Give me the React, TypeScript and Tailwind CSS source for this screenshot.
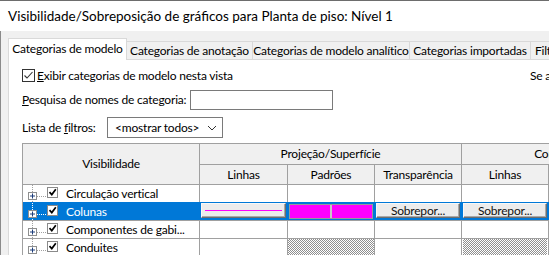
import type { ReactNode } from "react";

const grid = "border-[#a0a0a0]";

function TopCheck() {
  return (
    <span className="flex h-[13px] w-[13px] shrink-0 items-center justify-center border border-[#333333] bg-white">
      <svg width="11" height="11" viewBox="0 0 11 11">
        <path d="M1.5 5.5 L4 8 L9.5 2" fill="none" stroke="#333333" strokeWidth="1.1" />
      </svg>
    </span>
  );
}

function TreeNode({ selected }: { selected?: boolean }) {
  const dot = selected ? "#ffffff" : "#a0a0a0";
  return (
    <svg width="43" height="17" viewBox="0 0 43 17" className="shrink-0">
      <line x1="9.5" y1="0" x2="9.5" y2="17" stroke={dot} strokeDasharray="1 1" />
      <line x1="14" y1="11.5" x2="23" y2="11.5" stroke={dot} strokeDasharray="1 1" />
      <rect x="5.5" y="7.5" width="8" height="7" fill="#ffffff" stroke="#8e8f8f" />
      <line x1="7" y1="11" x2="12" y2="11" stroke="#1c3d7a" />
      <line x1="9.5" y1="8.5" x2="9.5" y2="13.5" stroke="#1c3d7a" />
      <rect x="24.5" y="2.5" width="10" height="10" fill="#ffffff" stroke="#8a8a8a" />
      <path d="M26.5 7.2 L28.8 9.6 L32.8 4.3" fill="none" stroke="#000000" strokeWidth="1.7" />
    </svg>
  );
}

function Cell({ w, children, className = "" }: { w: string; children?: ReactNode; className?: string }) {
  return <div className={`${w} h-full shrink-0 border-r ${className}`}>{children}</div>;
}

function Hatch() {
  return (
    <div className="h-full w-full bg-[repeating-conic-gradient(#8f8f8f_0_25%,#ffffff_0_50%)] bg-[length:2px_2px]" />
  );
}

function WinButton({ children }: { children?: ReactNode }) {
  return (
    <div className="flex h-[15px] w-full items-center justify-center border border-[#f8f8f8] border-r-[#6e6e6e] border-b-[#6e6e6e] bg-[#ececec] text-[#111111] shadow-[inset_-1px_-1px_0_#a8a8a8]">
      {children}
    </div>
  );
}

const rows = [
  { name: "Circulação vertical" },
  { name: "Colunas", selected: true },
  { name: "Componentes de gabi..." },
  { name: "Conduites", hatched: true },
];

export default function App() {
  return (
    <div className="h-[255px] w-[549px] overflow-hidden bg-white font-['Lato',sans-serif] text-[12px] tracking-[-0.2px] text-black">
      <div className="flex h-[31px] items-center border-t border-[#6d6d6d] pl-2 text-[13.5px] tracking-normal">
        Visibilidade/Sobreposição de gráficos para Planta de piso: Nível 1
      </div>

      <div className="h-[224px] border-l border-[#8a8a8a] bg-[#f0f0f0] pl-[7px] pt-[6px]">
        <div className="flex h-[22px] items-end whitespace-nowrap">
          <div className="relative z-10 -mb-px flex h-[22px] w-[119px] shrink-0 items-center justify-center border border-b-0 border-[#d9d9d9] bg-white pb-px">
            Categorias de modelo
          </div>
          {[
            ["Categorias de anotação", "w-[126px] justify-center"],
            ["Categorias de modelo analítico", "w-[157px] justify-center"],
            ["Categorias importadas", "w-[121px] justify-center"],
            ["Filtros", "w-[48px] justify-start pl-[4px]"],
          ].map(([label, w]) => (
            <div
              key={label}
              className={`flex h-[18px] ${w} shrink-0 items-center overflow-hidden border-t border-r border-[#d9d9d9] bg-[#f0f0f0]`}
            >
              {label}
            </div>
          ))}
        </div>

        <div className="h-[200px] border-l border-t border-[#d9d9d9] bg-white pl-[13px] pt-[9px]">
          <div className="flex h-[13px] items-center">
            <TopCheck />
            <span className="ml-[2px]">
              <span className="underline">E</span>xibir categorias de modelo nesta vista
            </span>
            <span className="ml-auto w-[19px] overflow-hidden whitespace-nowrap">Se a</span>
          </div>

          <div className="mt-[8px] flex h-[20px] items-center">
            <span className="w-[168px]">
              <span className="underline">P</span>esquisa de nomes de categoria:
            </span>
            <div className="h-[20px] w-[143px] border border-[#7a7a7a] bg-white" />
          </div>

          <div className="mt-[7px] flex h-[21px] items-center">
            <span className="w-[85px]">
              Lista de <span className="underline">f</span>iltros:
            </span>
            <div className="flex h-[21px] w-[116px] items-center border border-[#7a7a7a] bg-white pl-[7px] pr-[5px]">
              <span>&lt;mostrar todos&gt;</span>
              <svg width="10" height="6" viewBox="0 0 10 6" className="ml-auto">
                <path d="M1 1 L5 5 L9 1" fill="none" stroke="#333333" />
              </svg>
            </div>
          </div>

          <div className={`mt-[5px] w-[640px] border-l border-t ${grid}`}>
            <div className={`flex h-[41px] border-b ${grid}`}>
              <Cell w="w-[177px]" className={`${grid} flex items-center justify-center bg-[#f0f0f0]`}>
                Visibilidade
              </Cell>
              <div className="flex flex-col">
                <div className={`flex h-[21px] border-b ${grid}`}>
                  <Cell w="w-[262px]" className={`${grid} flex items-center justify-center bg-[#f0f0f0]`}>
                    Projeção/Superfície
                  </Cell>
                  <Cell w="w-[174px]" className={`${grid} flex items-center justify-center bg-[#f0f0f0]`}>
                    Corte
                  </Cell>
                </div>
                <div className="flex h-[19px]">
                  {[
                    ["Linhas", "w-[88px]"],
                    ["Padrões", "w-[87px]"],
                    ["Transparência", "w-[87px]"],
                    ["Linhas", "w-[87px]"],
                    ["Padrões", "w-[87px]"],
                  ].map(([label, w], i) => (
                    <Cell key={i} w={w} className={`${grid} flex items-center justify-center bg-[#f0f0f0]`}>
                      {label}
                    </Cell>
                  ))}
                </div>
              </div>
            </div>

            {rows.map((r, i) => {
              const sel = r.selected;
              const line = sel ? "border-[#0078d7]" : grid;
              const nextSel = rows[i + 1]?.selected;
              return (
                <div
                  key={r.name}
                  className={`flex h-[18px] border-b ${nextSel ? "border-[#0078d7]" : grid} ${sel ? "bg-[#0078d7]" : "bg-white"}`}
                >
                  <Cell w="w-[177px]" className={`${line} flex items-center ${sel ? "text-white" : ""}`}>
                    <TreeNode selected={sel} />
                    <span className="whitespace-nowrap">{r.name}</span>
                  </Cell>
                  <Cell w="w-[88px]" className={`${line} px-px`}>
                    {sel && (
                      <WinButton>
                        <span className="h-px w-[77px] bg-[#ff00ff]" />
                      </WinButton>
                    )}
                  </Cell>
                  <Cell w="w-[87px]" className={`${line} ${sel ? "px-[1px] pt-px pb-[1px]" : ""}`}>
                    {sel && (
                      <div className="flex h-full w-full border border-[#9a9a9a] bg-[#ff00ff]">
                        <span className="w-[40px]" />
                        <span className="w-[2px] bg-[#c8c8c8]" />
                      </div>
                    )}
                    {r.hatched && <Hatch />}
                  </Cell>
                  <Cell w="w-[87px]" className={`${line} px-px`}>
                    {sel && <WinButton>Sobrepor...</WinButton>}
                  </Cell>
                  <Cell w="w-[87px]" className={`${line} px-px`}>
                    {sel && <WinButton>Sobrepor...</WinButton>}
                    {r.hatched && <Hatch />}
                  </Cell>
                  <Cell w="w-[87px]" className={line} />
                </div>
              );
            })}
          </div>
        </div>
      </div>
    </div>
  );
}
